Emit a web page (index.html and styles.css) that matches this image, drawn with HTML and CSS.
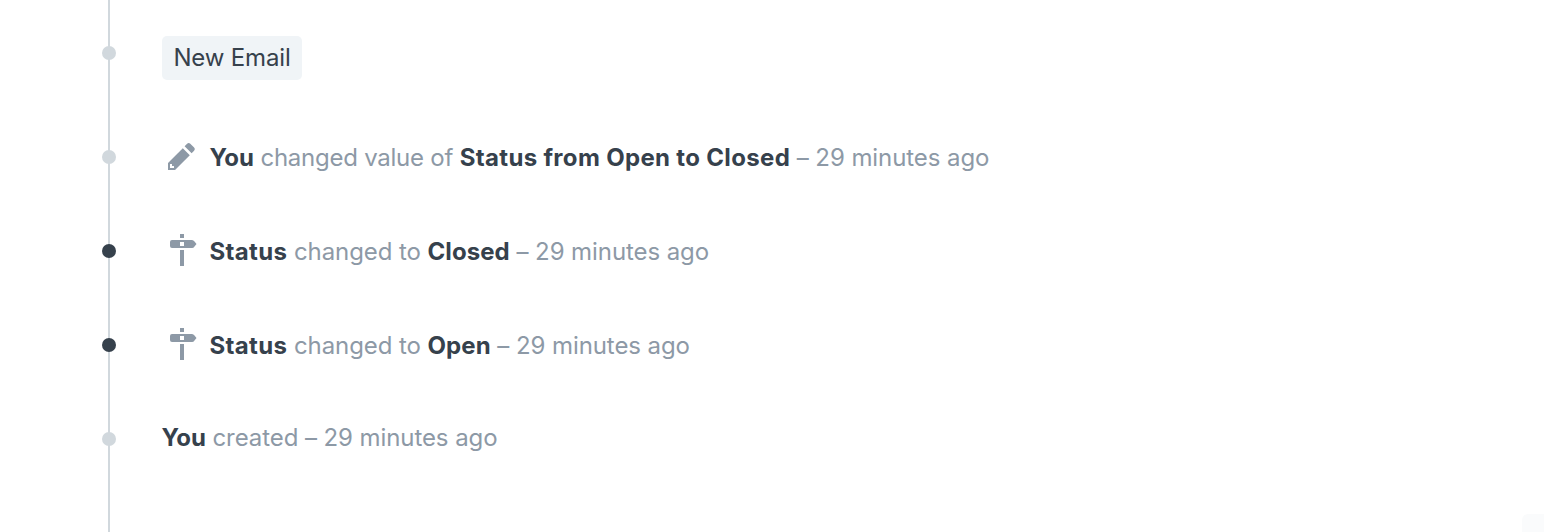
FILE: index.html
```
<!DOCTYPE html>
<html lang="en">
<head>
<meta charset="utf-8">
<title>Timeline</title>
<link rel="stylesheet" href="styles.css">
</head>
<body>
<main class="timeline">
  <div class="rail"></div>
  <div class="row row-email"><span class="dot"></span><button class="button">New Email</button></div>
  <div class="row"><span class="dot"></span>
    <svg class="icon" viewBox="0 0 40 40"><path fill-rule="evenodd" d="M6 26L20.800 11.200l7 7L13 33H6zM8 27v4h4v-2h-2v-2zM22.600 9.300l2.500-2.500q1.600-1.600 3.200 0l3.800 3.800q1.600 1.600 0 3.200l-2.500 2.500z"/></svg>
    <p class="text text-edit"><b class="you">You</b> <span class="value">changed value of</span> <b>Status from Open to Closed</b> – 29 minutes ago</p></div>
  <div class="row"><span class="dot dot-dark"></span>
    <svg class="icon" viewBox="0 0 40 40"><path fill-rule="evenodd" d="M18 3h4v4h-4zM10 9h20q1.500 0 2.500 1.500L34.500 13l-2 2.500Q31.500 17 30 17H10q-2 0-2-2v-4q0-2 2-2zM18 11v4h4v-4zM18 19h4v16h-4z"/></svg>
    <p class="text"><b>Status</b> changed to <b class="state">Closed</b> – 29 minutes ago</p></div>
  <div class="row"><span class="dot dot-dark"></span>
    <svg class="icon" viewBox="0 0 40 40"><path fill-rule="evenodd" d="M18 3h4v4h-4zM10 9h20q1.500 0 2.500 1.500L34.500 13l-2 2.500Q31.500 17 30 17H10q-2 0-2-2v-4q0-2 2-2zM18 11v4h4v-4zM18 19h4v16h-4z"/></svg>
    <p class="text"><b>Status</b> changed to <b class="state">Open</b> – 29 minutes ago</p></div>
  <div class="row"><span class="dot"></span><p class="text text-created"><b class="you">You</b> created – 29 minutes ago</p></div>
</main>
<div class="corner"></div>
</body>
</html>
```
FILE: styles.css
```
* { box-sizing: border-box; }
body { margin: 0; height: 532px; overflow: hidden; background: #fff; color: #36414c; font: 24px/36px Inter, sans-serif; position: relative; }
.timeline { position: relative; height: 532px; padding: 6px 0 0 102px; }
.rail { position: absolute; left: 108px; top: 0; width: 2px; height: 532px; background: #d1d8dd; }
.row { display: flex; align-items: center; height: 94px; }
.row-email { height: 104px; }
.dot { position: relative; width: 14px; height: 14px; margin-right: 46px; border-radius: 50%; background: #d1d8dd; }
.row-email .dot { margin-bottom: 10px; }
.dot-dark { background: #36414c; }
.button { height: 44px; width: 140px; padding: 0; border: 0; border-radius: 5px; background: #f0f4f7; color: #36414c; font: 24px/44px Inter, sans-serif; letter-spacing: -.15px; }
.icon { width: 40px; height: 40px; fill: #8d99a6; margin-right: 7.500px; }
.text { margin: 0; padding-top: 2px; color: #8d99a6; white-space: nowrap; letter-spacing: -.08px; }
.text b { color: #36414c; font-weight: 700; letter-spacing: .33px; }
.text .you { letter-spacing: -.1px; }
.text .state { letter-spacing: .08px; }
.value { letter-spacing: -.25px; }
.text-created { padding: 0 0 2px; margin-left: -.5px; }
.corner { position: absolute; right: 0; bottom: 0; width: 22px; height: 18px; background: #fafbfc; border-top-left-radius: 6px; }
```
